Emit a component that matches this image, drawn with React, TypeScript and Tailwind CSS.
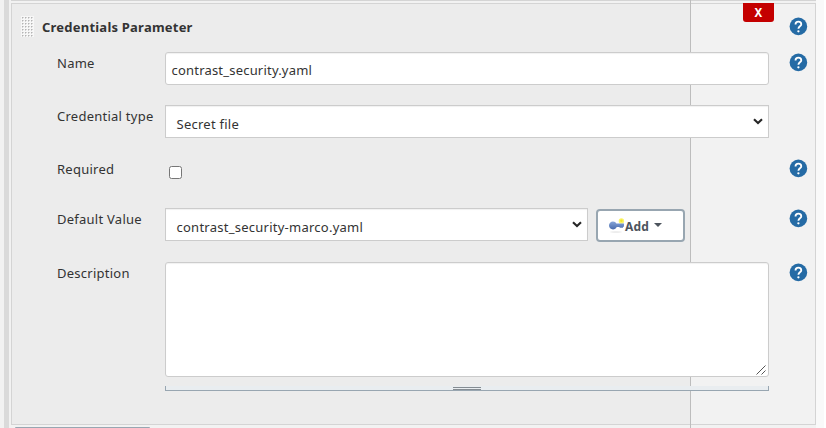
import React from 'react';

function Help({ className = '' }: { className?: string }) {
  return (
    <svg viewBox="-0.4 -0.4 18 18" className={`h-[18px] w-[18px] shrink-0 overflow-visible ${className}`}>
      <circle cx="9" cy="9" r="8.8" fill="#256ba5" />
      <path d="M6.1 7C6.1 5.1 7.4 4.2 9 4.2s2.9 1 2.9 2.6c0 2-2.9 2.1-2.9 4.5" fill="none" stroke="#fff" strokeWidth="1.8" />
      <circle cx="9" cy="13.9" r="1.15" fill="#fff" />
    </svg>
  );
}

function Chevron() {
  return (
    <svg viewBox="0 0 10 7" className="mr-[5px] mt-[12px] h-[7px] w-[10px] shrink-0">
      <path d="M1 1.2 5 5l4-3.8" fill="none" stroke="#262626" strokeWidth="2.1" />
    </svg>
  );
}

function Label({ children }: { children: React.ReactNode }) {
  return <div className="w-[108px] shrink-0 whitespace-nowrap leading-5">{children}</div>;
}

function Row({ label, height, help, children }: {
  label: string; height: string; help?: boolean; children: React.ReactNode;
}) {
  return (
    <div className={`flex items-start pl-[45px] ${height}`}>
      <Label>{label}</Label>
      <div className="w-[604px] shrink-0">{children}</div>
      {help && <Help className="ml-[20px]" />}
    </div>
  );
}

function Grip() {
  return (
    <svg className="mt-[12px] ml-[9px] h-[21px] w-[13px] shrink-0" shapeRendering="crispEdges">
      <defs>
        <pattern id="dots" width="3" height="3" patternUnits="userSpaceOnUse">
          <rect width="3" height="3" fill="#f7f7f7" />
          <rect x="1" y="1" width="1" height="1" fill="#b4b4b4" />
          <rect x="2" y="1" width="1" height="1" fill="#d5d5d5" />
          <rect x="1" y="2" width="1" height="1" fill="#d5d5d5" />
        </pattern>
      </defs>
      <rect width="13" height="21" fill="url(#dots)" />
    </svg>
  );
}

function KeyIcon() {
  return (
    <svg viewBox="0 0 16 16" className="h-4 w-4 shrink-0">
      <defs>
        <linearGradient id="key" x1="0" y1="0" x2="0" y2="1">
          <stop offset="0" stopColor="#86a5d8" />
          <stop offset="1" stopColor="#4a6cad" />
        </linearGradient>
      </defs>
      <ellipse cx="7" cy="14" rx="6" ry="0.8" fill="#e8e8e8" />
      <circle cx="12.4" cy="3" r="2.7" fill="#fbf56a" />
      <circle cx="12.4" cy="2.8" r="1.2" fill="#f0e62a" />
      <path d="M4 3.5c1.6 0 2.8.8 3.4 1.9H15v3.3h-1v1h-3.4V9H7.7c-.6 1.5-2 2.4-3.7 2.4-2.3 0-4-1.7-4-3.9s1.7-4 4-4z" fill="url(#key)" />
    </svg>
  );
}

export default function App() {
  return (
    <div className="relative flex h-[428px] w-[826px] overflow-hidden bg-white font-['Noto_Sans','Open_Sans',sans-serif] text-[13px] tracking-[0.25px] text-[#333]">
      <div className="w-1 bg-[#f2f2f2]" />
      <div className="w-[5px] bg-[#dadada]" />
      <div className="w-[2px] bg-[#f2f2f2]" />
      <div className="flex w-[805px] flex-col bg-[#f2f2f2]">
        <div className="mb-[2px] h-px shrink-0 bg-[#d4d4d4]" />
        <div className="h-[422px] shrink-0 border border-[#d4d4d4] bg-[linear-gradient(to_right,#ececec_678px,#f2f2f2_678px)]">
          <div className="flex h-[49px] items-start">
            <Grip />
            <h2 className="ml-[8px] mt-[13px] w-[701px] text-[13px] font-bold leading-5 tracking-[0.22px]">Credentials Parameter</h2>
            <button className="-mt-px h-[19px] w-[31px] rounded-b-[3px] bg-[#c40000] text-center text-[11.5px] font-bold leading-[19px] text-white">X</button>
            <Help className="ml-[15px] mt-[13px]" />
          </div>
          <div className="relative z-10">
            <Row label="Name" height="h-[53px]" help>
              <div className="-mt-px h-[33px] rounded-[3px] border border-[#ccc] bg-white pl-[5.5px] leading-[35px] tracking-[0.2px] shadow-[inset_0_1px_1px_rgba(0,0,0,0.06)]">contrast_security.yaml</div>
            </Row>
            <Row label="Credential type" height="h-[53px]">
              <div className="-mt-px flex h-[33px] border border-[#ccc] bg-white pl-[10.5px] leading-[36px] shadow-[inset_0_1px_1px_rgba(0,0,0,0.06)]">
                <span className="flex-1">Secret file</span><Chevron />
              </div>
            </Row>
            <Row label="Required" height="h-[50px]" help>
              <div className="ml-[4px] mt-[7px] h-[13px] w-[13px] rounded-[2.5px] border border-[#767676] bg-white" />
            </Row>
            <Row label="Default Value" height="h-[54px]" help>
              <div className="flex items-start gap-[8px]">
                <div className="-mt-px flex h-[33px] w-[423px] border border-[#ccc] bg-white pl-[10.5px] leading-[36px] shadow-[inset_0_1px_1px_rgba(0,0,0,0.06)]">
                  <span className="flex-1">contrast_security-marco.yaml</span><Chevron />
                </div>
                <button className="flex h-[33px] w-[89px] items-center rounded-[4px] border-2 border-[#98a6b1] bg-white pl-[11px] text-[12px] font-bold tracking-[0.2px] text-[#4d545d]">
                  <KeyIcon />
                  <span className="pt-[2px] leading-4">Add</span>
                  <svg viewBox="0 0 8 4" className="ml-[5px] mb-[1px] h-1 w-2"><path d="M0 0h8L4 4z" fill="#4d545d" /></svg>
                </button>
              </div>
            </Row>
            <Row label="Description" height="h-[160px]" help>
              <div className="-mt-px flex h-[115px] items-end justify-end rounded-[3px] border border-[#ccc] bg-white shadow-[inset_0_1px_1px_rgba(0,0,0,0.06)]">
                <svg viewBox="0 0 10 10" className="mb-[1px] mr-[2px] h-[10px] w-[10px]">
                  <path d="M.5 9.5l9-9M5.5 9.5l4-4" stroke="#555" strokeWidth="1" fill="none" />
                </svg>
              </div>
              <div className="mt-[9px] flex h-[5px] flex-col items-center gap-px border-x border-b border-[#98a6b1] bg-[#e9edf0] pt-px">
                <div className="h-px w-7 bg-[#858c92]" />
                <div className="h-px w-7 bg-[#858c92]" />
              </div>
            </Row>
          </div>
        </div>
        <div className="ml-[4px] mt-[2px] h-px w-[135px] shrink-0 rounded-t bg-[#98a6b1]" />
      </div>
      <div className="w-[8px] bg-[#f9f9f9]" />
      <div className="pointer-events-none absolute inset-y-0 left-[690px] w-px bg-[#bdbdbd]" />
    </div>
  );
}
